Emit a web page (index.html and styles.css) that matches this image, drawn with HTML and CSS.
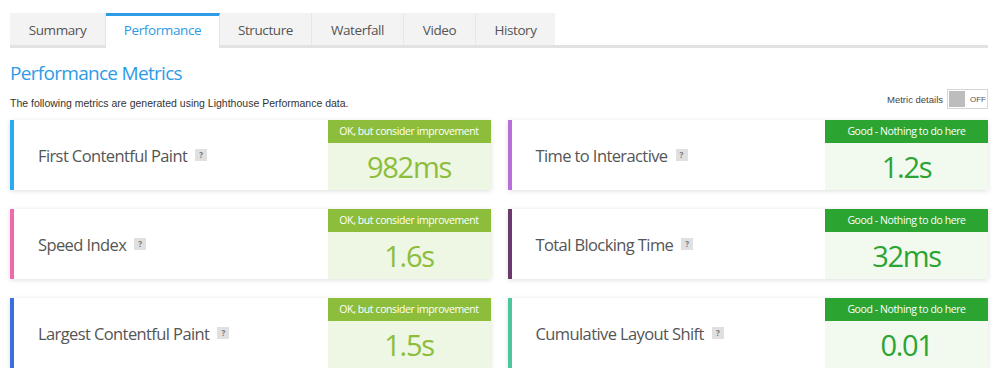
FILE: index.html
```html
<!DOCTYPE html>
<html>
<head>
<meta charset="utf-8">
<link rel="stylesheet" href="styles.css">
</head>
<body>
<div class="page">
  <nav class="tabs">
    <div class="tab">Summary</div>
    <div class="tab active">Performance</div>
    <div class="tab">Structure</div>
    <div class="tab">Waterfall</div>
    <div class="tab">Video</div>
    <div class="tab">History</div>
  </nav>
  <h1 class="title">Performance Metrics</h1>
  <div class="subrow">
    <p class="desc">The following metrics are generated using Lighthouse Performance data.</p>
    <div class="details">
      <span class="details-label">Metric details</span>
      <span class="toggle"><span class="knob"></span><span class="off">OFF</span></span>
    </div>
  </div>
  <div class="grid">
    <div class="card c-fcp">
      <div class="label">First Contentful Paint <span class="q">?</span></div>
      <div class="val ok"><div class="vh">OK, but consider improvement</div><div class="vv">982ms</div></div>
    </div>
    <div class="card c-tti">
      <div class="label">Time to Interactive <span class="q">?</span></div>
      <div class="val good"><div class="vh">Good - Nothing to do here</div><div class="vv">1.2s</div></div>
    </div>
    <div class="card c-si">
      <div class="label">Speed Index <span class="q">?</span></div>
      <div class="val ok"><div class="vh">OK, but consider improvement</div><div class="vv">1.6s</div></div>
    </div>
    <div class="card c-tbt">
      <div class="label">Total Blocking Time <span class="q">?</span></div>
      <div class="val good"><div class="vh">Good - Nothing to do here</div><div class="vv">32ms</div></div>
    </div>
    <div class="card c-lcp">
      <div class="label">Largest Contentful Paint <span class="q">?</span></div>
      <div class="val ok"><div class="vh">OK, but consider improvement</div><div class="vv">1.5s</div></div>
    </div>
    <div class="card c-cls">
      <div class="label">Cumulative Layout Shift <span class="q">?</span></div>
      <div class="val good"><div class="vh">Good - Nothing to do here</div><div class="vv">0.01</div></div>
    </div>
  </div>
</div>
</body>
</html>
```
FILE: styles.css
```css
* { box-sizing: border-box; }
html, body { margin: 0; padding: 0; background: #fff; }
body { font-family: "Open Sans", "Liberation Sans", sans-serif; color: #555; }
.page { padding: 13px 12px 0 10px; width: 1000px; }

.tabs {
  display: flex;
  border-bottom: 3px solid #e2e2e2;
  height: 35px;
}
.tab {
  height: 32px;
  background: #f3f3f3;
  border-right: 1px solid #e6e6e6;
  font-size: 13.5px;
  line-height: 34px;
  color: #555;
  text-align: center;
  letter-spacing: -0.4px;
}
.tab:nth-child(1) { width: 96px; }
.tab:nth-child(2) { width: 114px; }
.tab:nth-child(3) { width: 92px; }
.tab:nth-child(4) { width: 92px; }
.tab:nth-child(5) { width: 72px; }
.tab:nth-child(6) { width: 79px; border-right: none; }
.tab.active {
  background: #fff;
  color: #2d9be6;
  border-top: 3px solid #2d9be6;
  line-height: 29px;
  height: 35px;
  margin-bottom: -3px;
}

.title {
  margin: 12px 0 0 0;
  font-size: 19px;
  font-weight: 400;
  color: #2d9be6;
  line-height: 26px;
  letter-spacing: -0.7px;
}
.subrow {
  display: flex;
  justify-content: space-between;
  align-items: center;
  height: 24px;
  margin-top: 1px;
}
.desc {
  margin: 0;
  font-family: "Liberation Sans", Arial, sans-serif;
  font-size: 10.5px;
  color: #333;
  padding-top: 8px;
}
.details { display: flex; align-items: center; gap: 4px; }
.details-label {
  font-family: "Liberation Sans", Arial, sans-serif;
  font-size: 9.5px;
  color: #444;
}
.toggle {
  display: flex;
  align-items: center;
  border: 1px solid #d6d6d6;
  height: 20px;
  width: 41px;
  padding: 1px;
  background: #fff;
}
.knob { width: 16px; height: 16px; background: #bdbdbd; }
.off {
  font-family: "Liberation Sans", Arial, sans-serif;
  font-size: 8px;
  color: #555;
  margin-left: 5px;
}

.grid {
  display: grid;
  grid-template-columns: 1fr 1fr;
  column-gap: 17px;
  row-gap: 19px;
  margin-top: 9px;
}
.card {
  display: flex;
  height: 70px;
  background: #fff;
  border-left: 4px solid #29a8f0;
  box-shadow: 0 1px 5px rgba(0, 0, 0, 0.13);
}
.c-fcp { border-left-color: #2aaaf2; }
.c-tti { border-left-color: #b86fd8; }
.c-si { border-left-color: #f06aa9; }
.c-tbt { border-left-color: #6a3a6d; }
.c-lcp { border-left-color: #3a6fe0; }
.c-cls { border-left-color: #4dc6a0; }
.label {
  flex: 1;
  display: flex;
  align-items: center;
  padding-left: 24px;
  font-size: 16.5px;
  color: #555;
  letter-spacing: -0.6px;
  padding-bottom: 0;
}
.q {
  display: inline-block;
  width: 12px;
  height: 12px;
  margin-left: 8px;
  background: #e0e0e0;
  color: #777;
  font-size: 8px;
  line-height: 12px;
  text-align: center;
  font-weight: 700;
  letter-spacing: 0;
}
.val { width: 163px; display: flex; flex-direction: column; }
.vh {
  height: 23px;
  color: #fff;
  font-size: 10.5px;
  line-height: 23px;
  text-align: center;
  letter-spacing: -0.4px;
}
.vv {
  flex: 1;
  text-align: center;
  font-size: 29px;
  line-height: 47px;
  letter-spacing: -1.3px;
}
.ok .vh { background: #8dbe3b; }
.ok .vv { background: #eef6e4; color: #8dbe3b; }
.good .vh { background: #2ba432; }
.good .vv { background: #f2faf0; color: #2ba432; }
```
